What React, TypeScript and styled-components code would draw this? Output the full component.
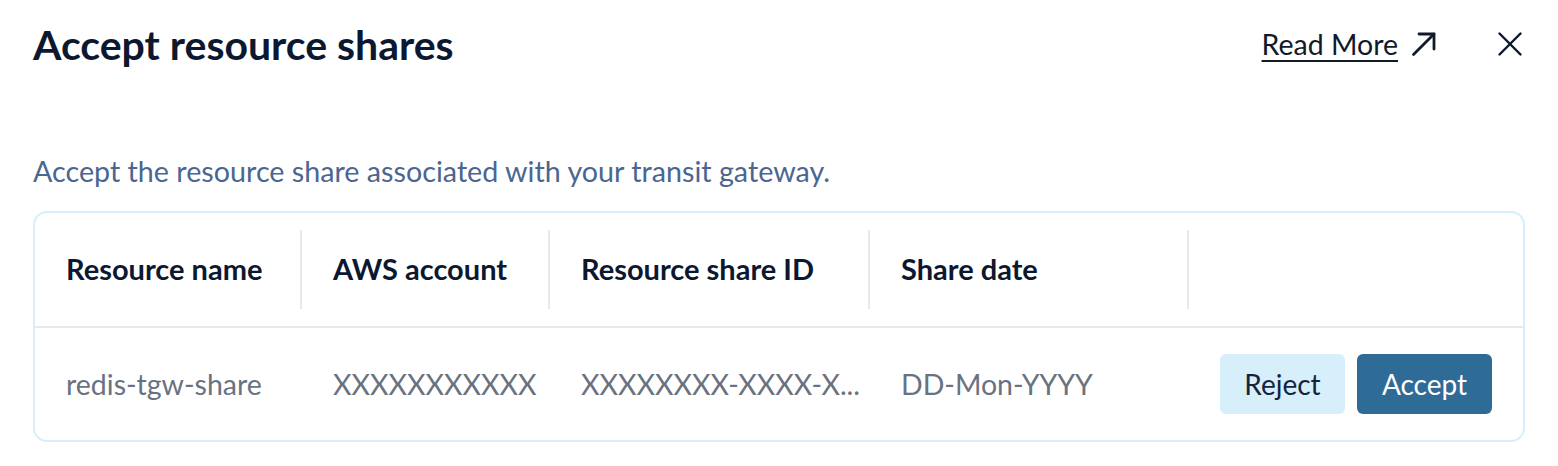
import React from "react";
import styled, { createGlobalStyle } from "styled-components";

const GlobalStyle = createGlobalStyle`
  html, body { margin: 0; padding: 0; background: #ffffff; }
  body { font-family: "Lato", "Noto Sans", sans-serif; -webkit-font-smoothing: antialiased; }
  * { box-sizing: border-box; }
`;

const Page = styled.div`
  width: 1558px;
  height: 466px;
  padding: 0 33px;
  background: #ffffff;
`;

const Header = styled.div`
  display: flex;
  align-items: center;
  height: 88px;
`;

const Title = styled.h1`
  margin: 0;
  flex: 1;
  font-size: 41px;
  font-weight: 700;
  color: #0c1830;
  line-height: 1;
`;

const ReadMore = styled.a`
  display: flex;
  align-items: center;
  gap: 13px;
  font-size: 28.5px;
  color: #101a2a;
  text-decoration: underline;
  text-decoration-thickness: 2px;
  text-underline-offset: 5px;
  cursor: pointer;
`;

const CloseButton = styled.button`
  display: flex;
  align-items: center;
  justify-content: center;
  width: 30px;
  height: 30px;
  margin-left: 58px;
  padding: 0;
  border: none;
  background: none;
  color: #0c1830;
  cursor: pointer;
`;

const Subtitle = styled.p`
  margin: 66px 0 0;
  font-size: 28.7px;
  line-height: 34px;
  color: #4b6690;
`;

const TableBox = styled.div`
  margin-top: 23px;
  border: 2px solid #d8eefb;
  border-radius: 14px;
  display: grid;
  grid-template-columns: 267px 248px 320px 319px 1fr;
`;

const HeadCell = styled.div<{ $last?: boolean }>`
  height: 79px;
  margin: 17px 0;
  padding: 0 31px 3px;
  display: flex;
  align-items: center;
  font-size: 29px;
  font-weight: 700;
  color: #0c1830;
  border-right: ${(p) => (p.$last ? "none" : "2px solid #e8e8e8")};
`;

const Divider = styled.div`
  grid-column: 1 / -1;
  height: 2px;
  background: #e8e8e8;
`;

const BodyCell = styled.div`
  height: 112px;
  padding: 0 31px;
  display: flex;
  align-items: center;
  font-size: 28.5px;
  color: #6a7280;
  white-space: nowrap;
`;

const Actions = styled.div`
  height: 112px;
  padding-right: 31px;
  display: flex;
  align-items: center;
  justify-content: flex-end;
  gap: 12px;
`;

const Button = styled.button<{ $primary?: boolean }>`
  height: 60px;
  width: ${(p) => (p.$primary ? "135px" : "125px")};
  padding: 0;
  border: none;
  border-radius: 6px;
  font-family: inherit;
  font-size: 28px;
  background: ${(p) => (p.$primary ? "#2f6b97" : "#d7eefb")};
  color: ${(p) => (p.$primary ? "#ffffff" : "#13253d")};
  cursor: pointer;
`;

export default function App() {
  return (
    <Page>
      <GlobalStyle />
      <Header>
        <Title>Accept resource shares</Title>
        <ReadMore>
          Read More
          <svg width="26" height="26" viewBox="0 0 26 26" fill="none" stroke="currentColor" strokeWidth="2.8" strokeLinecap="round" strokeLinejoin="round">
            <path d="M2.5 23.5 L23 3" />
            <path d="M8 3 H23 V18" />
          </svg>
        </ReadMore>
        <CloseButton aria-label="Close">
          <svg width="28" height="28" viewBox="0 0 24 24" fill="none" stroke="currentColor" strokeWidth="2.1" strokeLinecap="round">
            <path d="M3 3 L21 21" />
            <path d="M21 3 L3 21" />
          </svg>
        </CloseButton>
      </Header>
      <Subtitle>Accept the resource share associated with your transit gateway.</Subtitle>
      <TableBox>
        <HeadCell>Resource name</HeadCell>
        <HeadCell>AWS account</HeadCell>
        <HeadCell>Resource share ID</HeadCell>
        <HeadCell>Share date</HeadCell>
        <HeadCell $last />
        <Divider />
        <BodyCell>redis-tgw-share</BodyCell>
        <BodyCell>XXXXXXXXXXX</BodyCell>
        <BodyCell>XXXXXXXX-XXXX-X...</BodyCell>
        <BodyCell>DD-Mon-YYYY</BodyCell>
        <Actions>
          <Button>Reject</Button>
          <Button $primary>Accept</Button>
        </Actions>
      </TableBox>
    </Page>
  );
}
